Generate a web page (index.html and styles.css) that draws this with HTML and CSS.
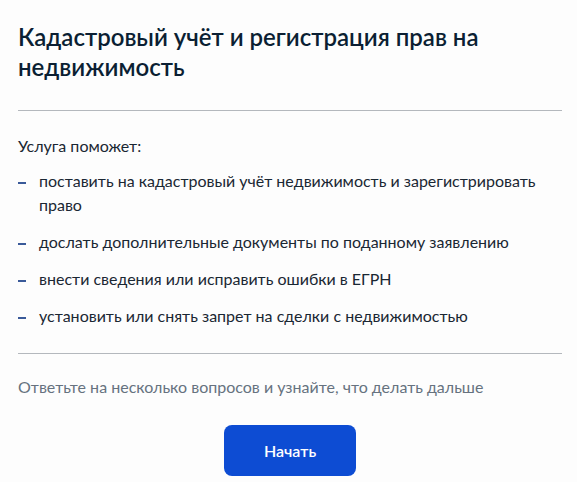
FILE: index.html
```html
<!DOCTYPE html>
<html lang="ru">
<head>
<meta charset="utf-8">
<title>Кадастровый учёт</title>
<link rel="stylesheet" href="styles.css">
</head>
<body>
<main class="card">
  <h1 class="title">Кадастровый учёт и регистрация прав на недвижимость</h1>
  <hr class="divider">
  <p class="lead">Услуга поможет:</p>
  <ul class="list">
    <li class="item"><span class="dash"></span><span class="text">поставить на кадастровый учёт недвижимость и зарегистрировать право</span></li>
    <li class="item"><span class="dash"></span><span class="text">дослать дополнительные документы по поданному заявлению</span></li>
    <li class="item"><span class="dash"></span><span class="text">внести сведения или исправить ошибки в ЕГРН</span></li>
    <li class="item"><span class="dash"></span><span class="text">установить или снять запрет на сделки с недвижимостью</span></li>
  </ul>
  <hr class="divider divider-bottom">
  <p class="hint">Ответьте на несколько вопросов и узнайте, что делать дальше</p>
  <div class="actions">
    <button class="btn" type="button">Начать</button>
  </div>
</main>
</body>
</html>
```

FILE: styles.css
```css
* { box-sizing: border-box; }
html, body {
  margin: 0;
  background: #fdfdfd;
}
body {
  font-family: Lato, "Noto Sans", sans-serif;
  color: #0b1f33;
}
.card {
  padding: 22px 15px 0 18px;
}
.title {
  margin: 0;
  font-size: 24px;
  line-height: 30px;
  font-weight: 600;
  color: #0b1f33;
  max-width: 480px;
}
.divider {
  margin: 28px 0 0;
  border: 0;
  height: 1px;
  background: #b4b8bd;
}
.lead {
  margin: 23px 0 0;
  font-size: 16px;
  line-height: 24px;
  color: #1a2733;
}
.list {
  list-style: none;
  margin: 11px 0 0;
  padding: 0;
  display: flex;
  flex-direction: column;
  gap: 13px;
}
.item {
  display: flex;
  align-items: flex-start;
  font-size: 16px;
  line-height: 24px;
  color: #1a2733;
}
.dash {
  flex: none;
  width: 8px;
  height: 2px;
  margin-top: 13px;
  margin-right: 13px;
  background: #3a5a99;
}
.text { flex: 1; }
.divider-bottom {
  margin-top: 25px;
}
.hint {
  margin: 21px 0 0;
  font-size: 16px;
  line-height: 24px;
  color: #66727f;
}
.actions {
  display: flex;
  justify-content: center;
  margin-top: 26px;
}
.btn {
  width: 132px;
  height: 51px;
  border: 0;
  border-radius: 8px;
  background: #0d4cd3;
  color: #fff;
  font-family: Lato, "Noto Sans", sans-serif;
  font-size: 16px;
  font-weight: 600;
  cursor: pointer;
}
```
